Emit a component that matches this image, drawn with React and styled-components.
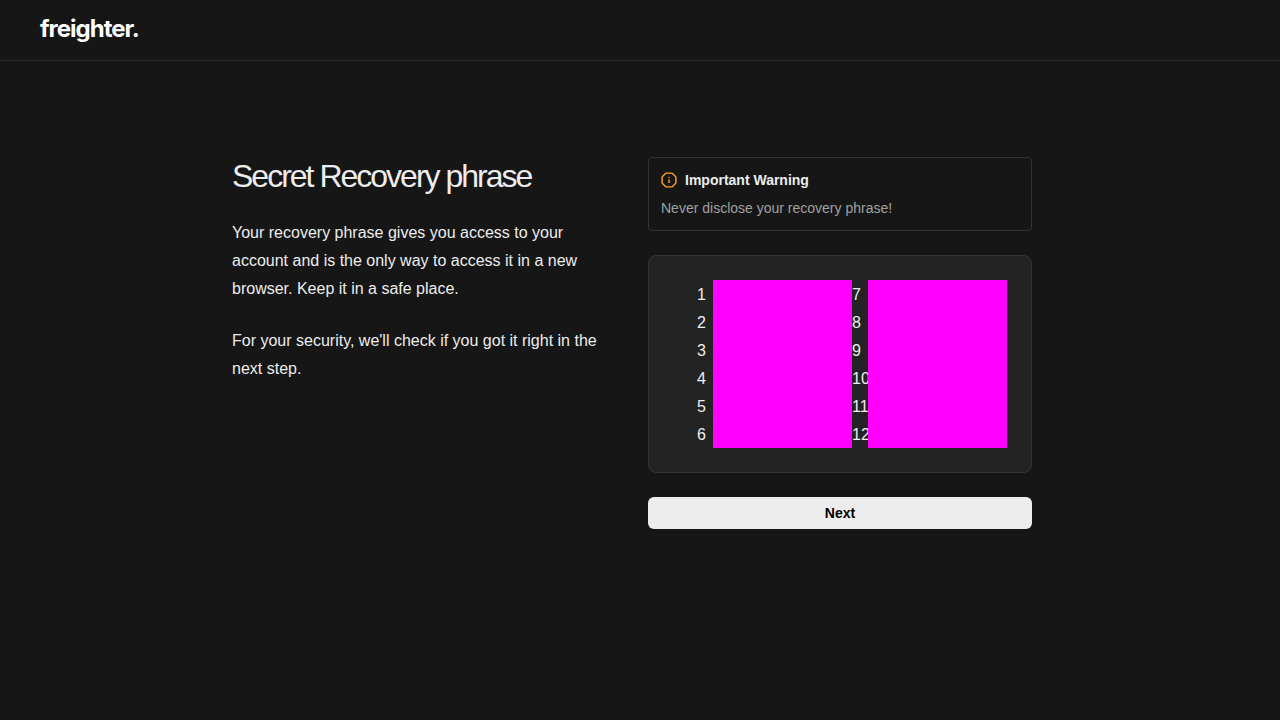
import React from "react";
import styled, { createGlobalStyle } from "styled-components";

const GlobalStyle = createGlobalStyle`
  *, *::before, *::after { box-sizing: border-box; }
  body {
    margin: 0;
    background: #161616;
    color: #ededed;
    font-family: "Liberation Sans", Helvetica, Arial, sans-serif;
    font-size: 16px;
    line-height: 28px;
  }
`;

const Header = styled.header`
  display: flex;
  align-items: center;
  height: 61px;
  padding: 0 40px 2px;
  border-bottom: 1px solid #282828;
`;

const Logo = styled.span`
  color: #fff;
  font-family: Inter, sans-serif;
  font-size: 24px;
  font-weight: 700;
  letter-spacing: -1px;
  line-height: 32px;
`;

const Main = styled.main`
  display: flex;
  justify-content: center;
  padding: 96px 24px 24px 8px;
`;

const Columns = styled.div`
  display: grid;
  grid-template-columns: 1fr 1fr;
  gap: 32px;
  width: 100%;
  max-width: 800px;
`;

const Column = styled.div`
  display: flex;
  flex-direction: column;
  gap: 24px;
`;

const Title = styled.h1`
  margin: 0;
  font-size: 32px;
  font-weight: 400;
  letter-spacing: -2px;
  line-height: 38px;
`;

const Paragraph = styled.p`
  margin: 0;
`;

const Notice = styled.section`
  display: flex;
  flex-direction: column;
  gap: 8px;
  padding: 12px;
  border: 1px solid #343434;
  border-radius: 4px;
  font-size: 14px;
  line-height: 20px;
`;

const NoticeTitle = styled.h2`
  display: flex;
  align-items: center;
  gap: 8px;
  margin: 0;
  font-size: 14px;
  font-weight: 700;
`;

const NoticeText = styled.p`
  margin: 0;
  color: #a0a0a0;
`;

const PhraseCard = styled.section`
  padding: 24px;
  border: 1px solid #343434;
  border-radius: 8px;
  background: #232323;
`;

const WordList = styled.ol`
  display: grid;
  grid-auto-flow: column;
  grid-template-rows: repeat(6, 28px);
  grid-auto-columns: 1fr;
  margin: 0;
  padding: 0 0 0 24px;
  list-style: none;
`;

const WordRow = styled.li`
  display: grid;
  grid-template-columns: 16px 1fr;
  grid-template-rows: 28px;
`;

const WordNumber = styled.span`
  line-height: 30px;
`;

const HiddenWord = styled.span`
  background: #ff00ff;
`;

const NextButton = styled.button`
  height: 32px;
  border: 0;
  border-radius: 6px;
  background: #ededed;
  color: #000;
  font-family: inherit;
  font-size: 14px;
  font-weight: 700;
  line-height: 20px;
  cursor: pointer;
`;

const WarningIcon = () => (
  <svg width="16" height="16" viewBox="0 0 16 16" fill="none" stroke="#ffa81c" strokeLinecap="round" strokeLinejoin="round" aria-hidden="true">
    <path strokeWidth="1.4" d="M5.4 1.1Q4.9 1.1 4.5 1.5L1.5 4.5Q1.1 4.9 1.1 5.4V10.6Q1.1 11.1 1.5 11.5L4.5 14.5Q4.9 14.9 5.4 14.9H10.6Q11.1 14.9 11.5 14.5L14.5 11.5Q14.9 11.1 14.9 10.6V5.4Q14.9 4.9 14.5 4.5L11.5 1.5Q11.1 1.1 10.6 1.1Z" />
    <path strokeWidth="1.4" d="M8 8V10.6M8 5.4H8.01" />
  </svg>
);

const wordNumbers = Array.from({ length: 12 }, (_, index) => index + 1);

export default function App() {
  return (
    <>
      <GlobalStyle />
      <Header>
        <Logo>freighter.</Logo>
      </Header>
      <Main>
        <Columns>
          <Column>
            <Title>Secret Recovery phrase</Title>
            <Paragraph>
              Your recovery phrase gives you access to your account and is the only way to access it in a new
              browser. Keep it in a safe place.
            </Paragraph>
            <Paragraph>For your security, we'll check if you got it right in the next step.</Paragraph>
          </Column>
          <Column>
            <Notice>
              <NoticeTitle>
                <WarningIcon />
                Important Warning
              </NoticeTitle>
              <NoticeText>Never disclose your recovery phrase!</NoticeText>
            </Notice>
            <PhraseCard>
              <WordList>
                {wordNumbers.map((number) => (
                  <WordRow key={number}>
                    <WordNumber>{number}</WordNumber>
                    <HiddenWord />
                  </WordRow>
                ))}
              </WordList>
            </PhraseCard>
            <NextButton type="button">Next</NextButton>
          </Column>
        </Columns>
      </Main>
    </>
  );
}
